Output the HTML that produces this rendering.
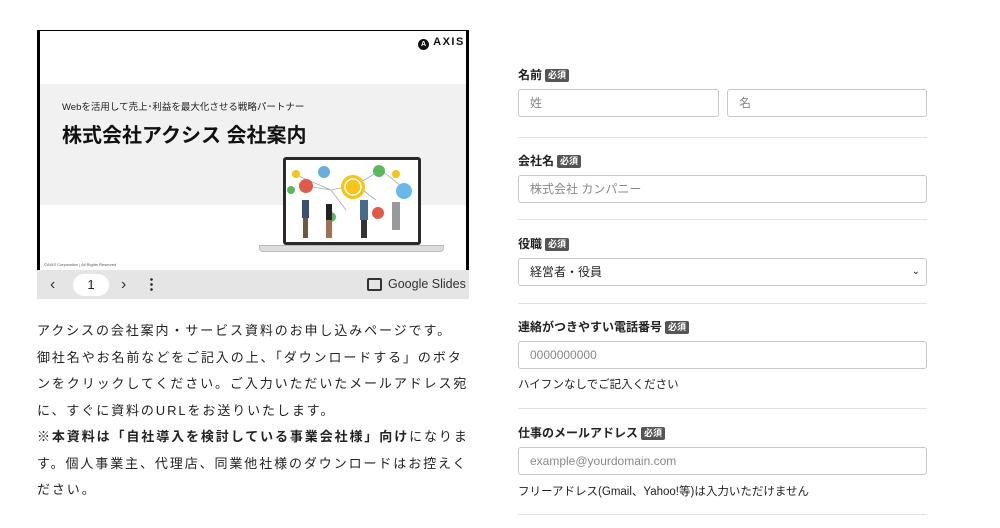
<!DOCTYPE html>
<html><head><meta charset="utf-8"><style>
*{box-sizing:border-box;margin:0;padding:0}
body{width:1000px;height:528px;background:#fff;font-family:"Liberation Sans","Noto Sans CJK JP",sans-serif;position:relative;overflow:hidden;color:#222}
.abs{position:absolute}
.frame{left:37px;top:30px;width:432px;height:269px;background:#000}
.slide{left:40px;top:31px;width:426px;height:239px;background:#fff}
.band{left:40px;top:84px;width:426px;height:121px;background:#f1f1f1}
.bar{left:37px;top:270px;width:432px;height:29px;background:#e5e5e5}
.intro{left:37px;top:318px;width:436px;font-size:13px;line-height:26.5px;letter-spacing:1.9px;color:#222}
.lbl{font-size:12px;font-weight:bold;color:#222;left:518px}
.req{display:inline-block;background:#555;color:#fff;font-size:9px;padding:0 3px;border-radius:2px;margin-left:3px;vertical-align:1px;line-height:13px}
.inp{border:1px solid #c8c8c8;border-radius:3px;height:28px;font-size:12px;color:#888;padding-left:11px;line-height:26px;background:#fff}
.sep{left:518px;width:409px;border-top:1px solid #e2e2e2;height:0}
.help{left:518px;font-size:11.5px;color:#222}
</style></head><body>
<div class="abs frame"></div>
<div class="abs slide"></div>
<div class="abs band"></div>
<div class="abs" style="left:418px;top:36px;font-size:11px;font-weight:bold;letter-spacing:1.5px;color:#111"><span style="display:inline-block;width:11px;height:11px;border-radius:50%;background:#111;color:#fff;font-size:7px;text-align:center;line-height:11px;vertical-align:-1px;letter-spacing:0">A</span> AXIS</div>
<div class="abs" style="left:62px;top:99px;font-size:9.5px;color:#222">Webを活用して売上･利益を最大化させる戦略パートナー</div>
<div class="abs" style="left:62px;top:119px;font-size:20px;font-weight:bold;color:#111">株式会社アクシス 会社案内</div>
<div class="abs" style="left:44px;top:262px;font-size:4px;color:#555">©AXIS Corporation | All Rights Reserved</div>
<div class="abs" style="left:283px;top:157px;width:138px;height:88px;background:#2a2a2a;border-radius:3px"></div>
<div class="abs" style="left:286px;top:160px;width:132px;height:82px;background:#fff"></div>
<div class="abs" style="left:259px;top:245px;width:185px;height:7px;background:#ddd;border-radius:0 0 4px 4px;border:1px solid #bbb"></div>
<svg class="abs" style="left:286px;top:160px" width="132" height="82">
<g stroke="#aaa" stroke-width="0.8" fill="none"><path d="M20 26L45 30L70 25L95 10L120 30M10 15L45 30M45 30L60 50M70 25L90 40"/></g>
<circle cx="67" cy="27" r="12" fill="#f5c518"/><circle cx="67" cy="27" r="8" fill="none" stroke="#fff" stroke-width="1.5"/>
<circle cx="20" cy="26" r="7" fill="#e05a4a"/><circle cx="10" cy="14" r="4" fill="#f5c518"/><circle cx="5" cy="30" r="4" fill="#5cb85c"/>
<circle cx="38" cy="12" r="6" fill="#6aaee0"/><circle cx="93" cy="11" r="6" fill="#5cb85c"/><circle cx="110" cy="14" r="4" fill="#f5c518"/>
<circle cx="118" cy="31" r="8" fill="#6ab8e8"/><circle cx="92" cy="53" r="6" fill="#e05a4a"/><circle cx="45" cy="57" r="5" fill="#5cb85c"/>
<rect x="16" y="40" width="7" height="18" fill="#3a5070"/><rect x="17" y="58" width="5" height="20" fill="#6a5a40"/>
<rect x="40" y="44" width="6" height="16" fill="#222"/><rect x="40" y="60" width="6" height="18" fill="#a07050"/>
<rect x="74" y="40" width="8" height="20" fill="#4a6a8a"/><rect x="75" y="60" width="6" height="18" fill="#333"/>
<rect x="106" y="42" width="8" height="28" fill="#999"/>
</svg>
<div class="abs bar"></div>
<div class="abs" style="left:50px;top:276px;font-size:16px;color:#333">‹</div>
<div class="abs" style="left:73px;top:274px;width:36px;height:22px;border-radius:11px;background:#fff;text-align:center;font-size:13px;line-height:22px;color:#222">1</div>
<div class="abs" style="left:121px;top:276px;font-size:16px;color:#333">›</div>
<div class="abs" style="left:150px;top:277px;width:3px;height:15px;background:radial-gradient(circle,#333 1.2px,transparent 1.5px) 0 0/3px 5px"></div>
<div class="abs" style="left:367px;top:278px;width:15px;height:13px;border:2px solid #333;border-radius:2px"></div>
<div class="abs" style="left:388px;top:277px;font-size:12.5px;color:#333">Google Slides</div>

<div class="abs intro">アクシスの会社案内・サービス資料のお申し込みページです。<br>御社名やお名前などをご記入の上、「ダウンロードする」のボタンをクリックしてください。ご入力いただいたメールアドレス宛に、すぐに資料のURLをお送りいたします。<br><b>※本資料は「自社導入を検討している事業会社様」向け</b>になります。個人事業主、代理店、同業他社様のダウンロードはお控えください。</div>

<div class="abs lbl" style="top:66px">名前<span class="req">必須</span></div>
<div class="abs inp" style="left:518px;top:89px;width:201px">姓</div>
<div class="abs inp" style="left:727px;top:89px;width:200px">名</div>
<div class="abs sep" style="top:137px"></div>
<div class="abs lbl" style="top:152px">会社名<span class="req">必須</span></div>
<div class="abs inp" style="left:518px;top:175px;width:409px">株式会社 カンパニー</div>
<div class="abs sep" style="top:219px"></div>
<div class="abs lbl" style="top:235px">役職<span class="req">必須</span></div>
<div class="abs inp" style="left:518px;top:258px;width:409px;color:#222">経営者・役員<span style="position:absolute;right:6px;top:0;font-size:10px">⌄</span></div>
<div class="abs sep" style="top:303px"></div>
<div class="abs lbl" style="top:318px">連絡がつきやすい電話番号<span class="req">必須</span></div>
<div class="abs inp" style="left:518px;top:341px;width:409px">0000000000</div>
<div class="abs help" style="top:376px">ハイフンなしでご記入ください</div>
<div class="abs sep" style="top:408px"></div>
<div class="abs lbl" style="top:424px">仕事のメールアドレス<span class="req">必須</span></div>
<div class="abs inp" style="left:518px;top:447px;width:409px">example@yourdomain.com</div>
<div class="abs help" style="top:483px">フリーアドレス(Gmail、Yahoo!等)は入力いただけません</div>
<div class="abs sep" style="top:514px"></div>
</body></html>
